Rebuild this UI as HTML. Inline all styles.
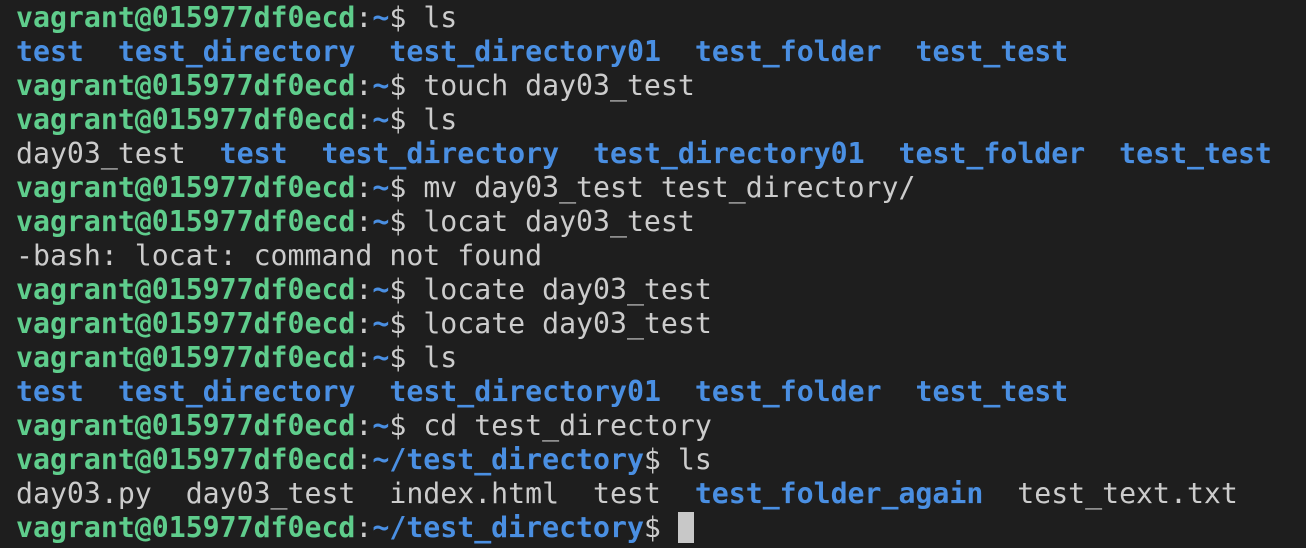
<!DOCTYPE html><html><head><style>
body{margin:0;background:#1e1e1e;width:1306px;height:548px;overflow:hidden}
pre{margin:0;padding:1px 0 0 16px;font-family:"DejaVu Sans Mono","Liberation Mono",monospace;font-size:28.2px;line-height:34px;color:#cccccc;white-space:pre}
.g{color:#5fcd8c;font-weight:bold}.b{color:#4a8fe2;font-weight:bold}
.c{display:inline-block;width:16px;height:31px;background:#c8c8c8;vertical-align:-6px}
</style></head><body><pre><span class="g">vagrant@015977df0ecd</span>:<span class="b">~</span>$ ls
<span class="b">test</span>  <span class="b">test_directory</span>  <span class="b">test_directory01</span>  <span class="b">test_folder</span>  <span class="b">test_test</span>
<span class="g">vagrant@015977df0ecd</span>:<span class="b">~</span>$ touch day03_test
<span class="g">vagrant@015977df0ecd</span>:<span class="b">~</span>$ ls
day03_test  <span class="b">test</span>  <span class="b">test_directory</span>  <span class="b">test_directory01</span>  <span class="b">test_folder</span>  <span class="b">test_test</span>
<span class="g">vagrant@015977df0ecd</span>:<span class="b">~</span>$ mv day03_test test_directory/
<span class="g">vagrant@015977df0ecd</span>:<span class="b">~</span>$ locat day03_test
-bash: locat: command not found
<span class="g">vagrant@015977df0ecd</span>:<span class="b">~</span>$ locate day03_test
<span class="g">vagrant@015977df0ecd</span>:<span class="b">~</span>$ locate day03_test
<span class="g">vagrant@015977df0ecd</span>:<span class="b">~</span>$ ls
<span class="b">test</span>  <span class="b">test_directory</span>  <span class="b">test_directory01</span>  <span class="b">test_folder</span>  <span class="b">test_test</span>
<span class="g">vagrant@015977df0ecd</span>:<span class="b">~</span>$ cd test_directory
<span class="g">vagrant@015977df0ecd</span>:<span class="b">~/test_directory</span>$ ls
day03.py  day03_test  index.html  test  <span class="b">test_folder_again</span>  test_text.txt
<span class="g">vagrant@015977df0ecd</span>:<span class="b">~/test_directory</span>$ <span class="c"></span></pre></body></html>
